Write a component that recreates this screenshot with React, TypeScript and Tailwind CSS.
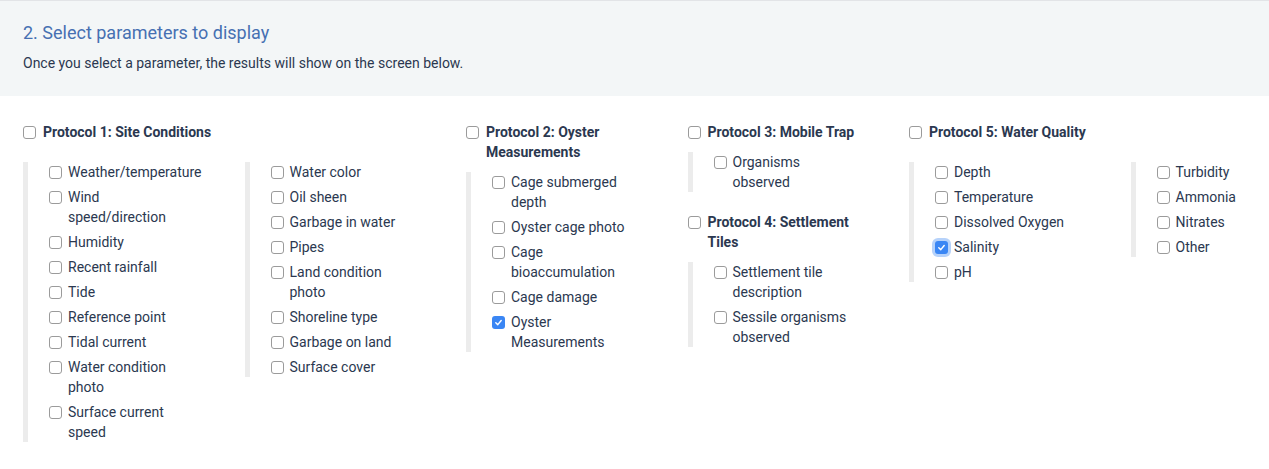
import React from 'react';

type Item = { label: React.ReactNode; checked?: boolean; focus?: boolean };

function Box({ checked, focus }: { checked?: boolean; focus?: boolean }) {
  if (checked) {
    return (
      <span
        className={`w-[13px] h-[13px] shrink-0 rounded-[3px] bg-[#3a86f4] flex items-center justify-center ${
          focus ? 'shadow-[0_0_0_3px_rgba(110,165,245,0.5)]' : ''
        }`}
      >
        <svg width="9" height="9" viewBox="0 0 10 10" fill="none">
          <path d="M2 5.3 L4.2 7.4 L8 2.8" stroke="white" strokeWidth="1.6" strokeLinecap="round" strokeLinejoin="round" />
        </svg>
      </span>
    );
  }
  return <span className="w-[13px] h-[13px] shrink-0 rounded-[3px] border border-[#9b9b9b] bg-white" />;
}

function SubList({ items, className = '' }: { items: Item[]; className?: string }) {
  return (
    <ul className={`border-l-[5px] border-[#ececec] pl-[21px] flex flex-col gap-[5px] ${className}`}>
      {items.map((it, i) => (
        <li key={i} className="flex items-start gap-[6px] text-[14px] leading-[20px]">
          <span className="h-[20px] flex items-center">
            <Box checked={it.checked} focus={it.focus} />
          </span>
          <span className="whitespace-nowrap">{it.label}</span>
        </li>
      ))}
    </ul>
  );
}

function Header({ children }: { children: React.ReactNode }) {
  return (
    <div className="flex items-start gap-[7px] text-[14px] leading-[20px] font-bold">
      <span className="h-[20px] flex items-center">
        <Box />
      </span>
      <span className="whitespace-nowrap">{children}</span>
    </div>
  );
}

const p1a: Item[] = [
  { label: 'Weather/temperature' },
  { label: <>Wind<br />speed/direction</> },
  { label: 'Humidity' },
  { label: 'Recent rainfall' },
  { label: 'Tide' },
  { label: 'Reference point' },
  { label: 'Tidal current' },
  { label: <>Water condition<br />photo</> },
  { label: <>Surface current<br />speed</> },
];

const p1b: Item[] = [
  { label: 'Water color' },
  { label: 'Oil sheen' },
  { label: 'Garbage in water' },
  { label: 'Pipes' },
  { label: <>Land condition<br />photo</> },
  { label: 'Shoreline type' },
  { label: 'Garbage on land' },
  { label: 'Surface cover' },
];

const p2: Item[] = [
  { label: <>Cage submerged<br />depth</> },
  { label: 'Oyster cage photo' },
  { label: <>Cage<br />bioaccumulation</> },
  { label: 'Cage damage' },
  { label: <>Oyster<br />Measurements</>, checked: true },
];

const p3: Item[] = [{ label: <>Organisms<br />observed</> }];

const p4: Item[] = [
  { label: <>Settlement tile<br />description</> },
  { label: <>Sessile organisms<br />observed</> },
];

const p5a: Item[] = [
  { label: 'Depth' },
  { label: 'Temperature' },
  { label: 'Dissolved Oxygen' },
  { label: 'Salinity', checked: true, focus: true },
  { label: 'pH' },
];

const p5b: Item[] = [
  { label: 'Turbidity' },
  { label: 'Ammonia' },
  { label: 'Nitrates' },
  { label: 'Other' },
];

export default function App() {
  return (
    <div className="font-['Roboto',sans-serif] text-[#2b3850] bg-white min-h-[469px] overflow-hidden">
      <div className="border-t border-[#e2e4e7] bg-[#f3f6f7] px-[23px] pt-[20px] pb-[23px]">
        <h2 className="text-[18px] leading-[24px] text-[#4670b2]">2. Select parameters to display</h2>
        <p className="mt-[8px] text-[14px] leading-[20px]">
          Once you select a parameter, the results will show on the screen below.
        </p>
      </div>

      <div className="flex gap-[21.5px] px-[23px] pt-[26px] w-[1400px]">
        <div className="w-[421.5px] shrink-0">
          <Header>Protocol 1: Site Conditions</Header>
          <div className="mt-[20px] flex items-start gap-[21.5px]">
            <SubList items={p1a} className="w-[200px]" />
            <SubList items={p1b} className="w-[200px]" />
          </div>
        </div>

        <div className="w-[200px] shrink-0">
          <Header>
            Protocol 2: Oyster
            <br />
            Measurements
          </Header>
          <SubList items={p2} className="mt-[10px]" />
        </div>

        <div className="w-[200px] shrink-0">
          <Header>Protocol 3: Mobile Trap</Header>
          <SubList items={p3} className="mt-[10px]" />
          <div className="mt-[20px]">
            <Header>
              Protocol 4: Settlement
              <br />
              Tiles
            </Header>
            <SubList items={p4} className="mt-[10px]" />
          </div>
        </div>

        <div className="w-[421.5px] shrink-0">
          <Header>Protocol 5: Water Quality</Header>
          <div className="mt-[20px] flex items-start gap-[21.5px]">
            <SubList items={p5a} className="w-[200px]" />
            <SubList items={p5b} className="w-[200px]" />
          </div>
        </div>
      </div>
    </div>
  );
}
